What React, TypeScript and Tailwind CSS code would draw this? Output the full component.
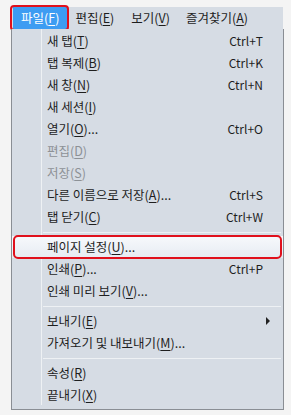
import type { ReactNode } from 'react';

type Item =
  | { kind: 'sep' }
  | {
      kind: 'item';
      label: ReactNode;
      shortcut?: string;
      disabled?: boolean;
      submenu?: boolean;
      marked?: boolean;
    };

const m = (before: string, key: string, after = '') => (
  <>
    {before}(<span className="underline underline-offset-2">{key}</span>){after}
  </>
);

const items: Item[] = [
  { kind: 'item', label: m('새 탭', 'T'), shortcut: 'Ctrl+T' },
  { kind: 'item', label: m('탭 복제', 'B'), shortcut: 'Ctrl+K' },
  { kind: 'item', label: m('새 창', 'N'), shortcut: 'Ctrl+N' },
  { kind: 'item', label: m('새 세션', 'I') },
  { kind: 'item', label: m('열기', 'O', '...'), shortcut: 'Ctrl+O' },
  { kind: 'item', label: m('편집', 'D'), disabled: true },
  { kind: 'item', label: m('저장', 'S'), disabled: true },
  { kind: 'item', label: m('다른 이름으로 저장', 'A', '...'), shortcut: 'Ctrl+S' },
  { kind: 'item', label: m('탭 닫기', 'C'), shortcut: 'Ctrl+W' },
  { kind: 'sep' },
  { kind: 'item', label: m('페이지 설정', 'U', '...'), marked: true },
  { kind: 'item', label: m('인쇄', 'P', '...'), shortcut: 'Ctrl+P' },
  { kind: 'item', label: m('인쇄 미리 보기', 'V', '...') },
  { kind: 'sep' },
  { kind: 'item', label: m('보내기', 'E'), submenu: true },
  { kind: 'item', label: m('가져오기 및 내보내기', 'M', '...') },
  { kind: 'sep' },
  { kind: 'item', label: m('속성', 'R') },
  { kind: 'item', label: m('끝내기', 'X') },
];

export default function App() {
  return (
    <div
      className="w-[291px] h-[415px] bg-[#f4f4f4] pt-[7px] pl-[11px] text-[12.5px] text-[#1e1e1e]"
      style={{ fontFamily: '"Noto Sans CJK KR", "Noto Sans", sans-serif' }}
    >
      {/* 메뉴 바 */}
      <div className="w-[272px] h-[22px] bg-[#d6dce4] flex items-center">
        <div className="relative h-full">
          <div className="h-full px-[8px] ml-[2px] bg-[#3d9cf2] text-white flex items-center">
            {m('파일', 'F')}
          </div>
          <div className="absolute -left-[1px] -right-[2px] -top-[2px] bottom-[-2px] border-2 border-[#e0101c] rounded-[4px]" />
        </div>
        <div className="pl-[8px] pr-[9px]">{m('편집', 'E')}</div>
        <div className="px-[8px]">{m('보기', 'V')}</div>
        <div className="px-[8px]">{m('즐겨찾기', 'A')}</div>
      </div>

      {/* 드롭다운 */}
      <div className="relative w-[273px] h-[381px] border border-[#8a8e94] border-t-0 bg-[#d6dce4] pt-[1px]">
        <div className="absolute left-[29px] top-0 bottom-[4px] w-px bg-[#c4cad2] border-r border-[#eef1f4]" />
        {items.map((it, i) =>
          it.kind === 'sep' ? (
            <div key={i} className="h-[8px] flex items-center pl-[31px] pr-[2px]">
              <div className="w-full h-px bg-[#c2c8d0] border-b border-[#eef1f4]" />
            </div>
          ) : (
            <div
              key={i}
              className={
                'relative h-[22px] flex items-center pl-[35px] pr-[20px] ' +
                (it.disabled ? 'text-[#8d9196] ' : '') +
                (it.marked ? 'bg-gradient-to-b from-[#f7f9fc] to-[#e6ebf2]' : '')
              }
            >
              <span className="flex-1">{it.label}</span>
              {it.shortcut && <span className="text-[12px]">{it.shortcut}</span>}
              {it.submenu && (
                <span className="mr-[-7px] w-0 h-0 border-y-[4px] border-y-transparent border-l-[4px] border-l-[#222]" />
              )}
              {it.marked && (
                <div className="absolute left-[1px] right-[1px] top-[-1px] bottom-[-1px] border-2 border-[#e0101c] rounded-[5px]" />
              )}
            </div>
          )
        )}
      </div>
    </div>
  );
}
